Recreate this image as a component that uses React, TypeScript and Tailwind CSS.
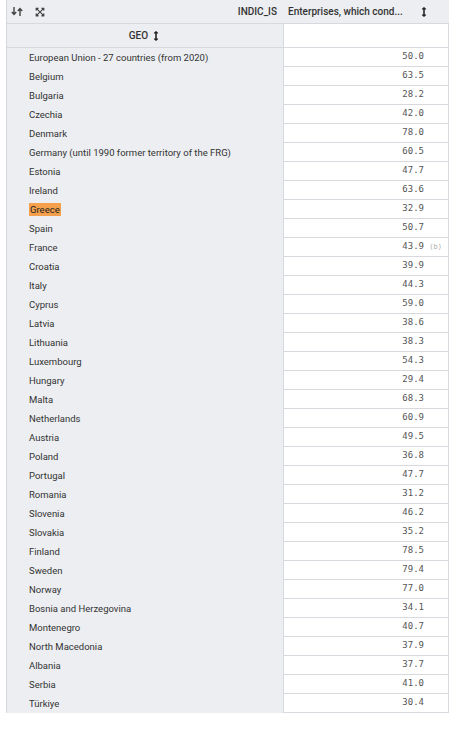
import { FaArrowsAltV, FaExpandArrowsAlt } from 'react-icons/fa'

type Row = { geo: string; value: string; flag?: string; highlight?: boolean }

const rows: Row[] = [
  { geo: 'European Union - 27 countries (from 2020)', value: '50.0' },
  { geo: 'Belgium', value: '63.5' },
  { geo: 'Bulgaria', value: '28.2' },
  { geo: 'Czechia', value: '42.0' },
  { geo: 'Denmark', value: '78.0' },
  { geo: 'Germany (until 1990 former territory of the FRG)', value: '60.5' },
  { geo: 'Estonia', value: '47.7' },
  { geo: 'Ireland', value: '63.6' },
  { geo: 'Greece', value: '32.9', highlight: true },
  { geo: 'Spain', value: '50.7' },
  { geo: 'France', value: '43.9', flag: '(b)' },
  { geo: 'Croatia', value: '39.9' },
  { geo: 'Italy', value: '44.3' },
  { geo: 'Cyprus', value: '59.0' },
  { geo: 'Latvia', value: '38.6' },
  { geo: 'Lithuania', value: '38.3' },
  { geo: 'Luxembourg', value: '54.3' },
  { geo: 'Hungary', value: '29.4' },
  { geo: 'Malta', value: '68.3' },
  { geo: 'Netherlands', value: '60.9' },
  { geo: 'Austria', value: '49.5' },
  { geo: 'Poland', value: '36.8' },
  { geo: 'Portugal', value: '47.7' },
  { geo: 'Romania', value: '31.2' },
  { geo: 'Slovenia', value: '46.2' },
  { geo: 'Slovakia', value: '35.2' },
  { geo: 'Finland', value: '78.5' },
  { geo: 'Sweden', value: '79.4' },
  { geo: 'Norway', value: '77.0' },
  { geo: 'Bosnia and Herzegovina', value: '34.1' },
  { geo: 'Montenegro', value: '40.7' },
  { geo: 'North Macedonia', value: '37.9' },
  { geo: 'Albania', value: '37.7' },
  { geo: 'Serbia', value: '41.0' },
  { geo: 'Türkiye', value: '30.4' },
]

function SortIcon() {
  return (
    <svg width="12" height="9" viewBox="0 0 12 9" className="text-[#444]">
      {/* down arrow */}
      <path d="M3 0v7M0.8 5l2.2 2.5L5.2 5" stroke="currentColor" strokeWidth="1.4" fill="none" />
      {/* up arrow */}
      <path d="M9 9V2M6.8 4L9 1.5 11.2 4" stroke="currentColor" strokeWidth="1.4" fill="none" />
    </svg>
  )
}

export default function App() {
  return (
    <div className="w-[456px] h-[737px] bg-white pl-[6px] pt-0 font-['Roboto','Liberation_Sans',sans-serif] text-[#333]">
      <div className="w-[443px] border-l border-[#d4d7db]">
        {/* top header */}
        <div className="flex h-[24px] items-center bg-[#eceef1] border-b border-[#d6d9dd]">
          <div className="flex w-[276px] items-center pr-[6px]">
            <div className="ml-[4px] flex items-center">
              <SortIcon />
            </div>
            <FaExpandArrowsAlt className="ml-[12px] text-[10px] text-[#444]" />
            <span className="ml-auto text-[10px] font-medium">INDIC_IS</span>
          </div>
          <div className="flex flex-1 items-center pl-[5px]">
            <span className="text-[10px] font-medium">Enterprises, which cond...</span>
            <FaArrowsAltV className="ml-[16px] text-[10px] text-[#222]" />
          </div>
        </div>

        {/* GEO header */}
        <div className="flex h-[24px] border-b border-[#d6d9dd]">
          <div className="flex w-[276px] items-center justify-center bg-[#eceef1]">
            <span className="text-[10px] font-medium">GEO</span>
            <FaArrowsAltV className="ml-[3px] text-[10px] text-[#222]" />
          </div>
          <div className="flex-1 bg-white border-l border-r border-[#d6d9dd]" />
        </div>

        {/* data rows */}
        {rows.map(r => (
          <div key={r.geo} className="flex h-[19px]">
            <div className="flex w-[276px] items-center bg-[#eceef1] pl-[22px]">
              <span
                className={`text-[9.5px] leading-[13px] ${
                  r.highlight ? 'bg-[#f5a04c] px-[1px] text-[#222]' : ''
                }`}
              >
                {r.geo}
              </span>
            </div>
            <div className="flex flex-1 items-center border-l border-r border-b border-[#d6d9dd] bg-white pr-[24px] justify-end relative">
              <span className="font-['DejaVu_Sans_Mono',monospace] text-[9px] text-[#555]">{r.value}</span>
              {r.flag && (
                <span className="absolute right-[6px] font-['DejaVu_Sans_Mono',monospace] text-[7px] text-[#aaa]">
                  {r.flag}
                </span>
              )}
            </div>
          </div>
        ))}
      </div>
    </div>
  )
}
